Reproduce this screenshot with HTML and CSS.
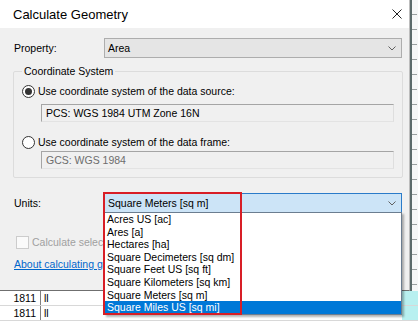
FILE: index.html
```html
<!DOCTYPE html>
<html lang="en">
  <head>
    <meta charset="UTF-8" />
    <meta name="viewport" content="width=device-width, initial-scale=1.0" />
    <title>Calculate Geometry</title>
    <link rel="stylesheet" href="styles.css">
  </head>
  <body>
    <div class="desk">
        <div class="upper">
            <div class="dialog">
                <div class="titlebar">
                    <span>Calculate Geometry</span>
                    <svg class="close" width="10" height="10" viewBox="0 0 10 10">
                        <path d="M0.5 0.5 L9.5 9.5 M9.5 0.5 L0.5 9.5" stroke="#222" stroke-width="1" fill="none"/>
                    </svg>
                </div>

                <div class="content">
                    <div class="row row-prop">
                        <span class="label">Property:</span>
                        <div class="combo">
                            <span>Area</span>
                            <svg class="chevron" width="8" height="5" viewBox="0 0 8 5">
                                <path d="M0.5 0.5 L4 4 L7.5 0.5" stroke="#606060" fill="none"/>
                            </svg>
                        </div>
                    </div>

                    <fieldset class="group">
                        <legend>Coordinate System</legend>
                        <div class="radio-row">
                            <span class="radio checked"></span>
                            <span>Use coordinate system of the data source:</span>
                        </div>
                        <div class="text-box">PCS: WGS 1984 UTM Zone 16N</div>
                        <div class="radio-row second">
                            <span class="radio"></span>
                            <span>Use coordinate system of the data frame:</span>
                        </div>
                        <div class="text-box disabled">GCS: WGS 1984</div>
                    </fieldset>

                    <div class="row row-units">
                        <span class="label">Units:</span>
                        <div class="combo active">
                            <span>Square Meters [sq m]</span>
                            <svg class="chevron" width="8" height="5" viewBox="0 0 8 5">
                                <path d="M0.5 0.5 L4 4 L7.5 0.5" stroke="#606060" fill="none"/>
                            </svg>
                            <ul class="list">
                                <li>Acres US [ac]</li>
                                <li>Ares [a]</li>
                                <li>Hectares [ha]</li>
                                <li>Square Decimeters [sq dm]</li>
                                <li>Square Feet US [sq ft]</li>
                                <li>Square Kilometers [sq km]</li>
                                <li>Square Meters [sq m]</li>
                                <li class="selected">Square Miles US [sq mi]</li>
                            </ul>
                        </div>
                    </div>

                    <!-- the open list covers the right part of these two rows -->
                    <div class="row row-check">
                        <span class="checkbox"></span>
                        <span class="muted">Calculate selected records only</span>
                    </div>

                    <div class="row row-link">
                        <a class="link" href="#">About calculating geometry</a>
                    </div>
                </div>
            </div>
            <div class="strip"></div>
        </div>

        <div class="rows">
            <div class="trow">
                <span class="cell-id">1811</span>
                <span class="cell-name">ll</span>
                <span class="cell-sel"></span>
            </div>
            <div class="trow">
                <span class="cell-id">1811</span>
                <span class="cell-name">ll</span>
                <span class="cell-sel"></span>
            </div>
        </div>

        <div class="mark"></div>
    </div>
  </body>
</html>
```

FILE: styles.css
```css
* {
    box-sizing: border-box;
}
body {
    margin: 0;
    width: 418px;
    height: 321px;
    overflow: hidden;
    background: #fff;
    font-family: "Liberation Sans", Arial, sans-serif;
    font-size: 10.5px;
    color: #000;
}
.desk {
    position: relative;
    display: flex;
    flex-direction: column;
    height: 321px;
}
.upper {
    display: flex;
    height: 291px;
}
.dialog {
    width: 410px;
    background: #f0f0f0;
    border-right: 1px solid #bdbdbd;
    border-bottom: 1px solid #6f6f6f;
    display: flex;
    flex-direction: column;
}
.strip {
    flex: 1;
    border-left: 2px solid #5c6b6b;
    background-color: #f6f7f7;
    background-image: repeating-linear-gradient(to bottom, transparent 0 14px, #9aa0a0 14px 15px);
    background-size: 5px 100%;
    background-repeat: no-repeat;
}
.titlebar {
    height: 28px;
    background: #fff;
    display: flex;
    align-items: center;
    justify-content: space-between;
    padding: 0 7px 0 13px;
    font-size: 13px;
}
.content {
    padding: 0 7px 0 14px;
}
.row {
    display: flex;
    align-items: center;
}
.row-prop {
    margin-top: 10px;
}
.label {
    width: 90px;
}
.combo {
    position: relative;
    flex: 1;
    height: 20px;
    border: 1px solid #adadad;
    background: #e5e5e5;
    display: flex;
    align-items: center;
    justify-content: space-between;
    padding: 0 5px 0 3px;
}
.combo.active {
    background: #cce4f7;
    border-color: #2a7bc9;
}
.group {
    margin: 7px -1px 0 -1px;
    min-width: 0;
    border: 1px solid #dcdcdc;
    border-radius: 2px;
    padding: 6px 8px 8px 8px;
}
.group legend {
    padding: 0 2px;
    line-height: 13px;
}
.radio-row {
    display: flex;
    align-items: center;
    height: 14px;
    gap: 3px;
}
.radio-row.second {
    margin-top: 13px;
}
.radio {
    width: 13px;
    height: 13px;
    border: 1px solid #333;
    border-radius: 50%;
    background: #fff;
    display: flex;
    align-items: center;
    justify-content: center;
}
.radio.checked::after {
    content: "";
    width: 7px;
    height: 7px;
    border-radius: 50%;
    background: #333;
}
.text-box {
    margin: 6px 0 0 19px;
    height: 18px;
    border: 1px solid;
    border-color: #a5a5a5 #dedede #e3e3e3 #a5a5a5;
    background: #f0f0f0;
    padding-left: 4px;
    display: flex;
    align-items: center;
}
.text-box.disabled {
    margin-top: 2px;
    color: #6d6d6d;
}
.row-units {
    margin-top: 15px;
}
.list {
    position: absolute;
    top: 18px;
    left: -1px;
    right: -1px;
    margin: 0;
    padding: 0;
    list-style: none;
    background: #fff;
    border: 1px solid #6b7d90;
    box-shadow: 2px 2px 2px rgba(0, 0, 0, 0.3);
    z-index: 2;
}
.list li {
    height: 12.6px;
    line-height: 12.6px;
    padding-left: 2px;
    white-space: nowrap;
}
.list li.selected {
    background: #0078d7;
    color: #fff;
}
.row-check {
    margin-top: 22px;
    width: 90px;
    height: 14px;
    gap: 3px;
    padding-left: 2px;
    white-space: nowrap;
    overflow: hidden;
}
.checkbox {
    flex: none;
    width: 13px;
    height: 13px;
    border: 1px solid #cccccc;
    background: #fafafa;
}
.muted {
    color: #a0a0a0;
}
.row-link {
    margin-top: 8px;
    width: 90px;
    height: 14px;
    white-space: nowrap;
    overflow: hidden;
}
.link {
    color: #0066cc;
    text-decoration: underline;
}
.rows {
    flex: 1;
    background: #fff;
    overflow: hidden;
}
.trow {
    display: flex;
    height: 15px;
    line-height: 15px;
    border-bottom: 1px solid #d8d8d8;
}
.cell-id {
    width: 41px;
    text-align: right;
    padding-right: 4px;
    border-right: 1px solid #808080;
}
.cell-name {
    flex: 1;
    padding-left: 3px;
}
.cell-sel {
    width: 16px;
    background: #b8f0f0;
}
.mark {
    position: absolute;
    left: 103px;
    top: 192px;
    width: 139px;
    height: 123px;
    border: 2px solid #d81e26;
    z-index: 3;
    pointer-events: none;
}
```
